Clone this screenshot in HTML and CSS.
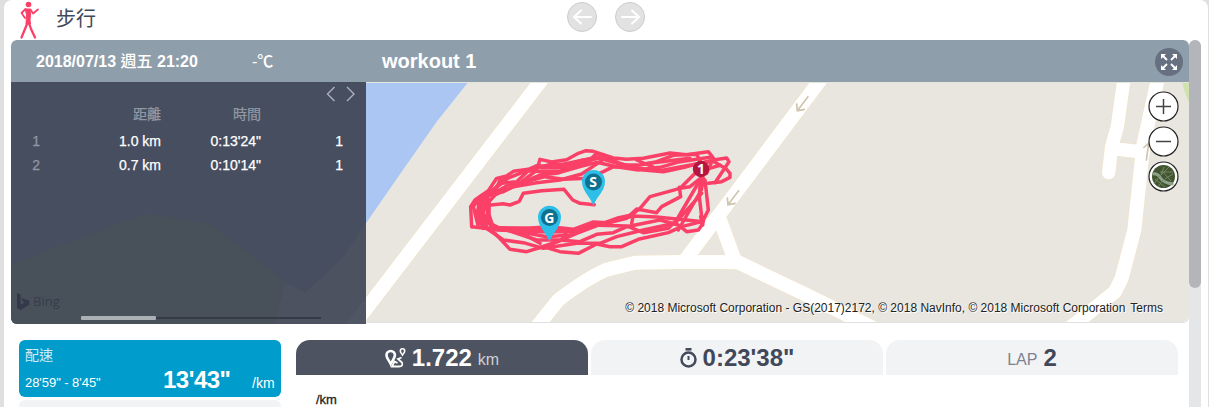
FILE: index.html
```html
<!DOCTYPE html>
<html lang="zh-Hant">
<head>
<meta charset="utf-8">
<title>workout 1</title>
<link rel="stylesheet" href="styles.css">
</head>
<body>
<main class="card">
  <header class="top">
    <svg class="walker" width="20" height="38" viewBox="20 1 20 38" fill="none" stroke="#fb4068" stroke-linecap="round" stroke-linejoin="round"><circle cx="28.500" cy="4.500" r="2.800" fill="#fb4068" stroke="none"/><path d="M25.500 9h4.500l.5 5-.5 6 .5 4h-4.500l.5-9z" fill="#fb4068" stroke-width="1"/><path d="M25.500 9l-4 4 3.500 5M30.500 9.500l2.500 4 5-4" stroke-width="1.800"/><path d="M27 24l-2 5-3.500 8.500M29 23l2 6 4 8.500" stroke-width="2.300"/></svg>
    <h1 class="sport">步行</h1>
    <nav class="pager">
      <button class="round" aria-label="previous"><svg width="28" height="28" viewBox="0 0 28 28"><path d="M23 14H6M13 7.500L6 14l7 6.500"/></svg></button>
      <button class="round" aria-label="next"><svg width="28" height="28" viewBox="0 0 28 28"><path d="M6 14h17M16 7.500l7 6.500-7 6.500"/></svg></button>
    </nav>
  </header>
  <div class="body">
    <div class="content">
      <section class="workout">
        <div class="bar">
          <div class="date">2018/07/13 <span class="cjk">週五</span> 21:20</div>
          <div class="temp">-℃</div>
          <h2 class="title">workout 1</h2>
          <svg class="expand" width="28" height="28" viewBox="0 0 28 28"><circle cx="14" cy="14" r="14" fill="#667080"/><g stroke="#fff" stroke-width="1.800" fill="none"><path d="M7 7l5 5M21 7l-5 5M7 21l5-5M21 21l-5-5"/></g><path d="M6 6h5L6 11zM22 6v5l-5-5zM6 22v-5l5 5zM22 22h-5l5-5z" fill="#fff"/></svg>
        </div>
        <div class="split">
          <aside class="laps">
            <svg class="terrain" width="355" height="242" viewBox="0 200 1065 726" aria-hidden="true">
              <g transform="translate(-33 554)"><path d="M33 193L240 113 435 40 625 70 795 195 855 245 825 372H33z" fill="#48515a"/><path d="M855 245l60 33 115-106 68-106v306H825z" fill="#4c525f"/><path d="M1043 363l55-70v79h-60z" fill="#505663"/></g>
            </svg>
            <div class="arrows"><svg width="30" height="16" viewBox="0 0 30 16" fill="none" stroke="#adb2ba" stroke-width="1.400"><path d="M8.500 1L1.500 8l7 7M21 1l7 7-7 7"/></svg></div>
            <div class="grid">
              <span></span><span class="dim">距離</span><span class="dim">時間</span><span></span>
              <span class="dim idx">1</span><span>1.0 km</span><span>0:13'24"</span><span>1</span>
              <span class="dim idx">2</span><span>0.7 km</span><span>0:10'14"</span><span>1</span>
            </div>
            <div class="bing"><svg width="13" height="17" viewBox="0 0 13 17"><path d="M0 0l3.600 1.300v10.500l4-2.500-2-1.100L4.300 5l7.900 2.800v4L3.600 17 0 15z" fill="#33394a"/></svg><span>Bing</span></div>
            <div class="hscroll"><i></i></div>
          </aside>
          <div class="map">
            <svg width="823" height="240" viewBox="366 82 823 240">
              <path d="M366 82h823v240H366z" fill="#e9e6df"/>
              <g transform="translate(360 70) scale(.33333)">
                <path d="M18 36H325L230 155 125 305 18 460z" fill="#abc6f2"/>
                <g fill="none" stroke="#f2e3c5">
                  <path d="M562 7L-12 756M1396 10L975 571M1080 450L1124 570M505 802L595 690Q680 625 740 599L825 578 1000 575 1135 577 1350 680 1600 804M2090 803L2160 750 2265 665 2285 625 2323 480 2350 225 2395 20" stroke-width="45"/>
                  <path d="M2293 20L2272 170 2255 230 2246 308M2255 236L2350 246" stroke-width="43" stroke-linecap="round"/>
                </g>
                <g fill="none" stroke="#fff">
                  <path d="M562 7L-12 756M1396 10L975 571M1080 450L1124 570M505 802L595 690Q680 625 740 599L825 578 1000 575 1135 577 1350 680 1600 804M2090 803L2160 750 2265 665 2285 625 2323 480 2350 225 2395 20" stroke-width="42"/>
                  <path d="M2293 20L2272 170 2255 230 2246 308M2255 236L2350 246" stroke-width="40" stroke-linecap="round"/>
                </g>
                <path d="M2466 36h24v66q-12-20-24-66" fill="#cfe3ac"/>
                <path d="M1345 79l-33 43m-2-22l2 22 23-4M1137 361l-33 43m-2-22l2 22 23-4M2350 234l18-16M2366 220l-7 52" fill="none" stroke="#cfc4ad" stroke-width="5"/>
              </g>
              <g class="track" transform="translate(360 70) scale(.33333)">
                <path d="M703 404L660 400 638 390 612 358 545 362 490 370 478 394 450 405 430 401 385 406 350 400"/>
                <path d="M335 470L332 410 345 390 385 362 410 325 440 318 460 304 505 298 535 285 540 268 575 276 620 269 655 250 678 242 700 244 760 264 800 268 850 265 930 249 980 254 1045 245 1060 264 1040 310"/>
                <path d="M355 470L340 410 360 380 400 360 430 330 480 310 530 295 575 282 620 284 670 270 720 265 790 285 840 285 890 275 940 256 1010 253 1030 290"/>
                <path d="M370 475L350 430 365 385 425 340 470 335 505 302 550 305 600 303 680 280 710 250 780 280 850 300 910 305 980 290 1060 270 1100 264 1107 275 1065 338"/>
                <path d="M380 470L355 410 390 370 430 365 480 340 540 315 590 310 660 290 710 277 770 290 835 300 900 292 960 275 1050 262"/>
                <path d="M400 480L370 430 382 380 445 345 500 335 555 320 610 328 685 325 730 305 760 290 830 294 900 302 1020 280 1060 274 1098 296 1110 310 1110 322 1085 335 1045 340"/>
                <path d="M370 475L360 425 405 375 460 350 530 338 600 330 665 312 725 272M530 287L590 290 665 280M600 285L710 262M545 294L640 292 715 262M420 330L396 385M440 328L410 350M525 305L485 335M830 270L900 300M850 282L990 265M1030 300L1080 286"/>
                <path d="M335 470L375 475 420 475 500 475 570 470 640 478 700 456 740 458 790 445 820 438 890 441 1030 455"/>
                <path d="M370 470L405 490 450 538 500 545 550 530 600 545 655 550 710 522 750 530 785 530 835 508 925 488 965 470 1025 455"/>
                <path d="M400 475L480 485 560 500 630 495 690 465 800 468 850 488 925 475 950 450 1020 330"/>
                <path d="M380 475L430 510 490 518 550 535 650 520 720 520 770 500 850 480 945 460 1025 370"/>
                <path d="M440 480L530 510 600 510 660 515 710 493 760 488 800 470 900 450 955 465 980 485 1015 480 1028 462 1022 440"/>
                <path d="M1028 320L990 350 960 355 870 380 840 415 815 435 770 445 715 465 650 490 580 520 530 535"/>
                <path d="M958 352L962 380 905 410 890 428 830 417 800 445 740 460"/>
                <path d="M1022 320L1018 380 1028 465M1030 325L1024 360 955 480M1015 300L965 350M820 435L815 460M1035 330L1045 420 1025 460M620 485L605 510 550 530M470 480L540 520M380 460L356 400M366 380L355 460"/>
                <path d="M410 478L480 480 565 484 640 482M395 475L580 479M385 435L395 465 420 478M385 390V440" stroke-width="15"/>
              </g>
              <g>
                <path d="M593.300 206.500C592 198 582 192 582 181.500a11.500 11.500 0 0 1 23 0C605 192 595 198 593.300 206.500" fill="#2ebfe8"/><circle cx="593.500" cy="182" r="8.500" fill="#10708f"/><text x="593" y="187" class="pin">S</text>
                <path d="M549.500 242.500C548 234 538 228 538 217.200a11.500 11.500 0 0 1 23 0C561 228 551 234 549.500 242.500" fill="#2ebfe8"/><circle cx="549.500" cy="217.500" r="8.500" fill="#10708f"/><text x="549.200" y="222.500" class="pin">G</text>
                <circle cx="701" cy="169" r="8.200" fill="#b6153e"/><text x="701" y="174" class="pin">1</text>
              </g>
            </svg>
            <div class="controls">
              <svg width="31" height="31" viewBox="0 0 31 31"><circle cx="15.500" cy="15.500" r="14.500"/><path d="M8 15.500h15M15.500 8v15"/></svg>
              <svg width="31" height="31" viewBox="0 0 31 31"><circle cx="15.500" cy="15.500" r="14.500"/><path d="M8 15.500h15"/></svg>
              <svg width="31" height="31" viewBox="0 0 31 31"><circle cx="15.500" cy="15.500" r="14.500"/><circle cx="15.500" cy="15.500" r="11.500" class="land"/><path d="M4.500 13q5-1 8 4t13 6" class="river"/><path d="M11 16L21 6M14 10l9 10M16 6l-3 8M12 11h13M17 18l8-5M10 17l-4 6M7 18l10 8M15 19l-5 7" class="lane"/></svg>
            </div>
            <div class="credit"><span>© 2018 Microsoft Corporation - GS(2017)2172, © 2018 NavInfo, © 2018 Microsoft Corporation</span><span>Terms</span></div>
          </div>
        </div>
      </section>
      <section class="stats">
        <div class="metrics">
          <div class="pace">
            <div class="pname">配速</div>
            <div class="prow"><span class="range">28'59" - 8'45"</span><b>13'43"</b><span class="unit">/km</span></div>
          </div>
          <div class="next"></div>
        </div>
        <div class="charts">
          <div class="tabs">
            <div class="tab on"><svg width="21" height="20" viewBox="0 0 21 20" fill="none" stroke="#fff"><path d="M5.700 16C4 12.500 1.500 10 1.500 7.200a4.200 4.200 0 0 1 8.400 0C9.900 10 7.500 12.500 5.700 16z" stroke-width="2.600"/><path d="M17.500 7c-1-1.500-2.200-2.500-2.200-4a2.200 2.200 0 0 1 4.400 0c0 1.500-1.200 2.500-2.200 4z" stroke-width="1.600"/><path d="M16.500 9.500l-3.500 1.500 4 3.500q1.500 4-3 4H7l2.500-5 3 1.500" stroke-width="1.800"/></svg><b>1.722</b><span>km</span></div>
            <div class="tab"><svg width="17" height="20" viewBox="0 0 17 20" fill="none" stroke="#434a5c"><circle cx="8.500" cy="11.500" r="7" stroke-width="2.500"/><path d="M5.500 1.300h6" stroke-width="2.600"/><path d="M8.500 8v4" stroke-width="2"/></svg><b>0:23'38"</b></div>
            <div class="tab"><span>LAP</span><b>2</b></div>
          </div>
          <div class="axis">/km</div>
        </div>
      </section>
    </div>
    <div class="vscroll"><i></i></div>
  </div>
</main>
</body>
</html>
```
FILE: styles.css
```css
* { box-sizing: border-box; }
body {
  margin: 0; height: 407px; overflow: hidden; background: #dfdfdf; color: #414859;
  font-family: "Liberation Sans", "Noto Sans CJK TC", sans-serif;
}
svg { display: block; flex: none; }
.card { height: 407px; margin: 0 1px 0 4px; background: #fff; border-radius: 8px 8px 0 0; overflow: hidden; }
.top { position: relative; display: flex; height: 40px; padding-left: 16px; align-items: center; }
.sport { margin: 0 0 0 16px; font-size: 20px; line-height: 38px; font-weight: 400; align-self: flex-start; }
.pager { display: flex; gap: 18px; position: absolute; left: 563px; top: 2px; }
.round { width: 30px; height: 30px; padding: 0; border: 1px solid #ccc; border-radius: 50%; background: #e2e2e2; }
.round svg { fill: none; stroke: #fff; stroke-width: 2; stroke-linecap: round; stroke-linejoin: round; }
.body { display: flex; height: 367px; padding-left: 7px; }
.content { width: 1178px; }
.vscroll { width: 12px; background: #e5e6e8; border-radius: 6px 6px 0 0; }
.vscroll i { display: block; height: 248px; border-radius: 6px; background: #b4b5bb; }
.bar { display: flex; align-items: center; height: 42px; padding: 0 6px 0 25px; background: #8f9eab; color: #fff; border-radius: 6px 6px 0 0; font-size: 16px; }
.date { width: 216px; padding-bottom: 3px; font-weight: 700; white-space: nowrap; }
.cjk { font-weight: 500; }
.temp { width: 130px; padding-bottom: 2px; font-weight: 500; }
.title { margin: 0; flex: 1; font-size: 20px; }
.expand { margin-top: 2px; }
.split { display: flex; height: 242px; }
.laps { position: relative; width: 355px; background: #464e60; border-radius: 0 0 0 6px; overflow: hidden; color: #fff; font-size: 14px; }
.terrain { position: absolute; inset: 0; }
.arrows { position: relative; display: flex; justify-content: flex-end; height: 20px; padding: 4px 10px 0 0; }
.grid { position: relative; display: grid; grid-template-columns: 29px 121px 100px 82px; grid-template-rows: 22px 5px 24px 24px; align-items: center; justify-items: end; -webkit-text-stroke: .25px; }
.grid span:nth-child(n+5) { grid-row: 3; }
.grid span:nth-child(n+9) { grid-row: 4; }
.dim { color: #9298a3; }
.bing { position: absolute; left: 6px; top: 211px; display: flex; gap: 3px; color: #363d4d; font: 13px/17px "Open Sans", sans-serif; }
.hscroll { position: absolute; left: 70px; top: 234px; width: 240px; height: 4px; background: linear-gradient(transparent 1px, #353b46 1px 3px, transparent 3px); }
.hscroll i { display: block; width: 75px; height: 4px; border-radius: 1px; background: #aab0b3; }
.map { position: relative; width: 823px; height: 241px; overflow: hidden; border-bottom: 1px solid #dfe0e2; border-radius: 0 0 6px 0; }
.map::before { content: ""; position: absolute; left: 0; right: 0; top: 0; height: 1px; background: #e6e4df; }
.track { stroke-width: 10.5; }
.track path { fill: none; stroke: #fb4068; stroke-linecap: round; stroke-linejoin: round; }
.pin { fill: #fff; font: 700 14px "Noto Sans", sans-serif; text-anchor: middle; }
.controls { position: absolute; right: 10px; top: 9px; display: grid; gap: 4px; }
.controls circle { fill: #fff; stroke: #222; stroke-width: 1.2; }
.controls path { fill: none; stroke: #444; stroke-width: 1.5; }
.controls .land { fill: #41562f; stroke: none; }
.controls .river { stroke: #8fa18a; stroke-width: 3; }
.controls .lane { stroke: #75876b; stroke-width: 1; }
.credit { position: absolute; right: 26px; bottom: 6px; display: flex; gap: 5px; color: #222; font-size: 12px; line-height: 16px; white-space: nowrap; text-shadow: 1px 1px 0 #fff; }
.stats { display: flex; gap: 15px; padding: 16px 0 0 8px; }
.metrics { width: 262px; }
.pace { height: 57px; padding: 5px 6px; border-radius: 6px; background: #009ccb; color: #fff; }
.pname { font-size: 14px; line-height: 20px; color: #d0ecf5; }
.prow { display: flex; height: 29px; align-items: center; font-size: 13px; }
.range { width: 138px; padding-top: 5px; letter-spacing: -.05px; }
.prow b { width: 89px; font-size: 24px; letter-spacing: -.5px; }
.unit { padding-top: 6px; font-size: 14px; }
.next { margin-top: 3px; height: 7px; border-radius: 6px 6px 0 0; background: #f2f3f5; }
.tabs { display: flex; gap: 3px; }
.tab { display: flex; align-items: center; justify-content: center; gap: 6px; width: 292px; height: 35px; border-radius: 14px 14px 0 0; background: #f2f3f5; }
.tab b { font-size: 24px; line-height: 35px; }
.tab span { font-size: 16px; padding-top: 5px; color: #7d8291; }
.tab.on { background: #4d5361; color: #fff; }
.tab.on span { color: #cdd0d5; }
.axis { padding: 18px 0 0 20px; font-size: 13px; line-height: 14px; color: #222; -webkit-text-stroke: .3px; }
```
